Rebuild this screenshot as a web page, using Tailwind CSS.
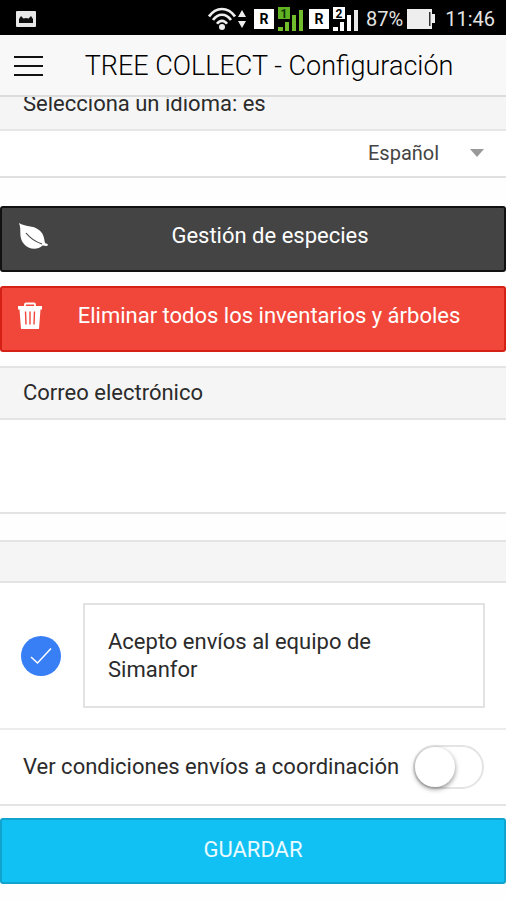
<!DOCTYPE html>
<html lang="es">
<head>
<meta charset="utf-8">
<meta name="viewport" content="width=device-width, initial-scale=1">
<title>TREE COLLECT - Configuración</title>
<script src="https://cdn.jsdelivr.net/npm/@tailwindcss/browser@4"></script>
</head>
<body class="min-h-screen overflow-x-hidden bg-[#fefefe] font-[Roboto,sans-serif] text-[22px] leading-7 text-[#2b2b2b]">

<div class="relative z-10">
  <!-- Status bar -->
  <div class="flex h-[35px] items-center justify-between bg-black pt-0.5 pr-[11px] pl-4 text-xl text-[#e4e4e4]">
    <svg class="h-4 w-5" viewBox="0 0 20 16" aria-hidden="true">
      <rect width="20" height="16" rx="1" fill="#e8e8e8"/>
      <path d="M3 12V8l2-3 2.500 2.500L10 7l2.500.5L15 5l2 3v4z" fill="#111"/>
    </svg>
    <div class="flex items-center">
      <svg class="mr-0.5 h-6 w-7" viewBox="0 0 28 24" fill="none" stroke="#eee" stroke-width="2.700" aria-hidden="true">
        <path d="M1 9.500C8-.5 20-.5 27 9.500"/>
        <path d="M5 13c5-7 13-7 18 0"/>
        <path d="M9 16.800c3-4 7-4 10 0"/>
        <circle cx="14" cy="20" r="3" fill="#eee" stroke="none"/>
      </svg>
      <svg class="mr-2 h-5 w-2" viewBox="0 0 8 20" fill="#eee" aria-hidden="true"><path d="M4 1l4 7H0zM4 19l4-7H0z"/></svg>
      <span class="mr-1 flex size-5 items-center justify-center bg-white text-sm leading-5 font-bold text-black">R</span>
      <svg class="mr-1.5 h-6 w-[25px]" viewBox="0 0 25 24" aria-hidden="true">
        <path d="M0 0h12v12H0z" fill="#62b322"/>
        <text x="6" y="10.500" text-anchor="middle" font-family="Roboto, sans-serif" font-size="12" font-weight="700" fill="#10300a">1</text>
        <path d="M0 20h5v4H0zM7 15h4v9H7zM14 8h4v16h-4zM21 3h4v21h-4z" fill="#72bd2b"/>
      </svg>
      <span class="mr-1 flex size-5 items-center justify-center bg-white text-sm leading-5 font-bold text-black">R</span>
      <svg class="mr-2 h-6 w-[25px]" viewBox="0 0 25 24" aria-hidden="true">
        <path d="M0 0h12v12H0z" fill="#fff"/>
        <text x="6" y="10.500" text-anchor="middle" font-family="Roboto, sans-serif" font-size="12" font-weight="700" fill="#000">2</text>
        <path d="M0 20h5v4H0zM7 15h4v9H7zM14 8h4v16h-4z" fill="#fff"/>
        <path d="M21 3h4v21h-4z" fill="#e8e8e8"/>
      </svg>
      <span class="mr-1">87%</span>
      <svg class="mr-2.5 h-5 w-7" viewBox="0 0 28 20" aria-hidden="true">
        <path d="M0 0h25v5h3v9h-3v6H0z" fill="#eee"/>
        <path d="M22 3h1.500v14H22z" fill="#333"/>
      </svg>
      <span>11:46</span>
    </div>
  </div>

  <!-- App bar -->
  <header class="flex h-[62px] items-center border-b-2 border-[#dcdcdc] bg-[#f8f8f8] px-3.5">
    <button type="button" aria-label="Menú" class="h-6 w-7">
      <svg class="h-6 w-[29px]" viewBox="0 0 29 24" stroke="#111" stroke-width="2" aria-hidden="true"><path d="M0 4h29M0 13h29M0 22h29"/></svg>
    </button>
    <h1 class="flex-1 pt-0.5 pl-1 text-center text-[27px] leading-8 font-light whitespace-nowrap text-black">TREE COLLECT - Configuración</h1>
  </header>
</div>

<main>
  <!-- Top divider sits partly scrolled under the app bar -->
  <div class="-mt-[18px] flex h-[52px] items-center border-b-2 border-[#e6e6e6] bg-[#f5f5f5] px-[23px]">
    <label for="idioma">Selecciona un idioma: es</label>
  </div>
  <div class="flex h-[47px] items-center justify-end gap-[30px] border-b-2 border-[#e0e0e0] bg-white pr-[22px] pb-0.5">
    <select id="idioma" class="appearance-none bg-transparent text-xl text-[#444]">
      <option>Español</option>
    </select>
    <svg class="h-2 w-3.5" viewBox="0 0 14 8" fill="#999" aria-hidden="true"><path d="M0 0h14L7 8z"/></svg>
  </div>

  <button type="button" class="mt-7 flex h-[66px] w-full items-center rounded-[3px] border-2 border-[#111] bg-[#444] px-4 pb-1.5 text-white">
    <svg class="h-7 w-[30px] shrink-0" viewBox="0 0 30 28" aria-hidden="true">
      <path d="M1 1C7 5 15 3 21 8c5 4 5 8 6 13l2.500 1c.7.800 0 2-1 2l-4-.5C19 29 10 27 6 22 0 15 4 8 1 1z" fill="#fff"/>
      <path d="M8 11c4 5 10 9 16 11" fill="none" stroke="#444" stroke-width="1.200"/>
    </svg>
    <span class="flex-1 pl-1">Gestión de especies</span>
  </button>

  <button type="button" class="mt-3.5 flex h-[66px] w-full items-center rounded-[3px] border-2 border-[#d42015] bg-[#f0473a] px-4 pb-1.5 text-white">
    <svg class="h-7 w-6 shrink-0" viewBox="0 0 24 28" aria-hidden="true">
      <path d="M7 4V2.500Q7 1.500 8 1.500h8q1 0 1 1V4" fill="none" stroke="#fff" stroke-width="1.800"/>
      <path d="M0 4h24v3.500h-1.500L21 27H3L1.500 7.500H0z" fill="#fff"/>
      <path d="M7.500 9.500l.5 13M12 9.500v13M16.500 9.500l-.5 13" stroke="#f0473a" stroke-width="1.400"/>
    </svg>
    <span class="flex-1 pl-2">Eliminar todos los inventarios y árboles</span>
  </button>

  <div class="mt-3.5 flex h-[54px] items-center border-y-2 border-[#e4e4e4] bg-[#f5f5f5] px-[23px]">
    <label for="correo">Correo electrónico</label>
  </div>
  <div class="flex h-[94px] items-center border-b-2 border-[#e4e4e4] bg-white px-[23px]">
    <input id="correo" type="email" class="h-14 w-full bg-transparent outline-none">
  </div>

  <div class="mt-[26px] h-[43px] border-y-2 border-[#e4e4e4] bg-[#f5f5f5]"></div>

  <div class="flex items-center gap-[22px] border-b-2 border-[#ececec] bg-white px-[21px] py-5">
    <span class="relative size-10 shrink-0">
      <input id="acepto" type="checkbox" checked class="size-10 appearance-none rounded-full bg-[#387ef5]">
      <svg class="pointer-events-none absolute inset-0 size-10" viewBox="0 0 40 40" fill="none" stroke="#fff" stroke-width="1.500" aria-hidden="true"><path d="M10 21l6.500 6L30 12.500"/></svg>
    </span>
    <label for="acepto" class="flex h-[105px] flex-1 items-center border-2 border-[#e2e2e2] pr-20 pl-[23px]">Acepto envíos al equipo de Simanfor</label>
  </div>

  <div class="flex h-[76px] items-center justify-between border-b-2 border-[#e4e4e4] bg-white pr-[22px] pl-[23px]">
    <label for="condiciones" class="whitespace-nowrap">Ver condiciones envíos a coordinación</label>
    <input id="condiciones" type="checkbox" role="switch" class="flex h-11 w-[71px] shrink-0 appearance-none items-center rounded-full border-2 border-[#e4e4e4] bg-white before:size-10 before:rounded-full before:bg-white before:shadow-[0_2px_5px_rgba(0,0,0,0.45)]">
  </div>

  <button type="button" class="mt-3 h-[66px] w-full rounded-[3px] border-2 border-[#0fa3cd] bg-[#11c1f3] pb-0.5 text-[#eafaff]">GUARDAR</button>
</main>
</body>
</html>
